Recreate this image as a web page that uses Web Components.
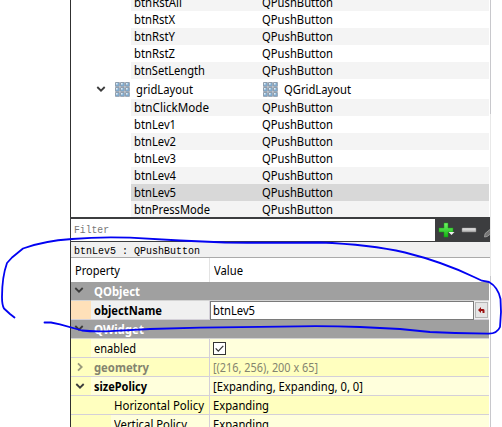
<!DOCTYPE html>
<html lang="en"><head><meta charset="utf-8"><title>Object inspector</title>
<style>html,body{margin:0;width:502px;height:427px;overflow:hidden;background:#fff}</style></head><body>
<designer-panel></designer-panel>
<script>
const make = (name, html, setup) => {
  const t = document.createElement('template');
  t.innerHTML = html;
  customElements.define(name, class extends HTMLElement {
    connectedCallback() {
      if (this.shadowRoot) return;
      this.attachShadow({mode: 'open'}).append(t.content.cloneNode(true));
      if (setup) setup(this, this.shadowRoot);
    }
  });
};

// A label whose natural width is condensed or widened to the w attribute.
make('fit-label', `<style>
:host{display:block;white-space:pre;flex:none;line-height:17px}
span{display:inline-block;transform-origin:0 50%}
</style><span><slot></slot></span>`, (el, root) => {
  const s = root.querySelector('span'), w = +el.getAttribute('w');
  const n = s.getBoundingClientRect().width;
  el.style.width = w + 'px';
  if (n) s.style.transform = `scaleX(${w / n})`;
});

make('chevron-mark', `<style>
:host{display:block;flex:none;width:10px;height:10px;color:#3b3b3b}
svg{display:block}:host([closed]) svg{transform:rotate(-90deg)}
:host([closed]){color:#98987c}
</style><svg width="10" height="10"><path d="M1.3 3 5 6.7 8.7 3" fill="none" stroke="currentColor" stroke-width="1.8"/></svg>`);

make('grid-icon', `<style>:host{display:block;flex:none;width:15px;height:15px}svg{display:block}</style>
<svg width="15" height="15"><g id="c"></g></svg>`,
(el, root) => {
  const g = root.querySelector('#c');
  const cell = (x, y, s, f) => {
    const r = document.createElementNS('http://www.w3.org/2000/svg', 'rect');
    for (const [k, v] of Object.entries({x, y, width: s, height: s, fill: f})) r.setAttribute(k, v);
    g.append(r);
  };
  for (let y = 0; y < 3; y++) for (let x = 0; x < 3; x++) {
    cell(x*5+.2, y*5+.2, 4.5, '#76879a');
    cell(x*5+1, y*5+1, 3, '#7fa9cc');
    cell(x*5+1, y*5+1, 1.6, '#dcecf7');
  }
});

make('tree-row', `<style>
:host{display:flex;height:17px;padding-left:60px;flex:none}
.b{flex:1;display:grid;grid-template-columns:128px 1fr;padding-left:3px;background:var(--bg,#fff)}
:host([alt]){--bg:#f4f4f4}:host([selected]){--bg:#d8d8d8}
</style><div class="b"><slot></slot></div>`);

make('tree-group', `<style>
:host{display:flex;height:20px;flex:none;align-items:center;box-sizing:border-box;padding-left:25px}
.a{display:flex;width:167px;align-items:center}.c{display:flex;align-items:center}
grid-icon{margin-left:9px;margin-right:6px}.c grid-icon{margin-left:0}
fit-label{margin-top:1px}
</style><div class="a"><chevron-mark></chevron-mark><grid-icon></grid-icon><fit-label w="57">gridLayout</fit-label></div>
<div class="c"><grid-icon></grid-icon><fit-label w="67">QGridLayout</fit-label></div>`);

make('filter-bar', `<style>
:host{display:flex;flex:none;height:25px;box-sizing:border-box;padding:2px 0 1px 1px;background:#3c3d3f;width:421px;overflow:hidden;margin-left:-1px}
.i{width:364px;background:#fff;color:#777;font-family:"Liberation Mono",monospace;font-size:11.5px;padding-left:3px;box-sizing:border-box;flex:none}
fit-label{line-height:22px}svg{display:block;flex:none}
</style><div class="i"><fit-label w="35">Filter</fit-label></div>
<svg width="56" height="22"><defs><linearGradient id="p" x2="0" y2="1"><stop stop-color="#72f466"/><stop offset="1" stop-color="#13b313"/></linearGradient><linearGradient id="m" x2="0" y2="1"><stop stop-color="#f1f1f1"/><stop offset="1" stop-color="#aaa"/></linearGradient></defs>
<path d="M9 4h4v5h5v4h-5v5H9v-5H4V9h5z" fill="url(#p)" stroke="#149d14" stroke-width=".5"/><path d="M13.5 13h6l-3 3z" fill="#eee"/>
<rect x="27" y="9" width="14" height="4" rx=".6" fill="url(#m)" stroke="#898989" stroke-width=".5"/>
<path d="m49.5 18 .6-3.5 6-5v5l-4 3z" fill="#777" stroke="#aaa" stroke-width=".8"/></svg>`);

make('property-section', `<style>
:host{display:flex;flex:none;height:19px;box-sizing:border-box;border-bottom:1px solid #d4d4d4;background:#a0a0a0;color:#fff;font-weight:700;padding-left:3px}
chevron-mark{margin-top:3px;margin-right:10px}::slotted(fit-label){margin-top:1px}
</style><chevron-mark></chevron-mark><slot></slot>`);

make('property-row', `<style>
:host{display:grid;grid-template-columns:139px 1fr;flex:none;height:19px;box-sizing:border-box;border-bottom:1px solid #d4d0d8;background:var(--row,#ffffdc)}
:host([deep]){--row:#ffffbf}
.n{display:flex;border-right:1px solid #d4d0d8;box-sizing:border-box}
.g{flex:none;width:20px;box-sizing:border-box;padding:4px 0 0 4px;background:var(--gutter,#ffffbf)}
:host([child]) .g{width:40px}
.n>.t{padding-left:3px}
.v{display:flex;padding-left:3px;min-width:0}
::slotted(fit-label){margin-top:1px}
:host([bold]) .t{font-weight:700}:host([dim]){color:#84846f}
:host([editing]){--row:#f0f0f0;--gutter:#ffe0b9}
:host([editing]) .v{padding-left:0}
</style><div class="n"><div class="g"><slot name="mark"></slot></div><div class="t"><slot name="name"></slot></div></div><div class="v"><slot></slot></div>`);

make('check-mark', `<style>:host{display:block;padding:3px 0 0 0}svg{display:block}</style>
<svg width="13" height="13"><rect x=".5" y=".5" width="12" height="12" fill="#fff" stroke="#333"/><path d="m2.7 6.3 2.6 2.8 5-5.3" fill="none" stroke="#333" stroke-width="1.2"/></svg>`);

make('line-edit', `<style>
:host{display:grid;grid-template-columns:264px 14px;height:18px}
.i{box-sizing:border-box;border:1px solid #7a7a7a;background:#fff;padding-left:2px}
.r{margin-left:1px;width:13px;height:16px;box-sizing:border-box;margin-top:1px;border:1px solid #b5b5b5;background:#e5e5e5}svg{display:block}
</style><div class="i"><slot></slot></div><div class="r"><svg width="11" height="14"><path d="M5 4 2 7l3 3V8.1h1.5v2h2V7.4Q8.5 6 7 6H5z" fill="#9b1010"/></svg></div>`);

make('ink-loop', `<style>:host{position:absolute;inset:0;pointer-events:none}svg{display:block}</style>
<svg width="502" height="427" fill="none" stroke="#0202f2" stroke-width="1.8" stroke-linecap="round" stroke-linejoin="round">
<path d="M14.5 317.5 10 314 4 308.5Q2 305 2 297 2 277 7 263L12 257.5 23 248.5Q43 241 72 239 100 236.5 130 237.7L180 240.5 225 242.5Q270 243 320 242.5 370 244.5 405 252.5 443 262 474 277L482 280.7 489 282Q498 287 500.5 299L501 312 500 327Q497 334 488 333.7L455 333 430 332 400 329 360 327Q320 325.5 280 326.7L200 327.7 150 329 115 330.8Q95 332 82 330.5L60 324.3 51 322.5H44.5"/></svg>`);

make('designer-panel', `<style>
:host{display:block;position:relative;width:502px;height:427px;overflow:hidden;font:12px/17px "Noto Sans","Open Sans",sans-serif;color:#000}
.p{display:flex;flex-direction:column;width:418px;height:427px;margin-left:70px;border-left:1px solid #303030;box-sizing:content-box;flex:none}
.f{display:flex;width:502px;height:427px}
.tree{display:flex;flex:none;flex-direction:column;height:217px;overflow:hidden;width:418px}
.tree>tree-row:first-child{margin-top:-6px}
.sel{flex:none;height:16px;width:420px;box-sizing:border-box;background:#f0f0f0;border-bottom:1px solid #aaa;font:11.5px/15px "Liberation Mono",monospace;padding-left:3px}
.h{display:grid;grid-template-columns:139px 1fr;height:24px;flex:none}
.h>div{padding:4px 0 0 4px}.h>div:first-child{border-right:1px solid #e3e3e3}
.edge{flex:none;width:1px;margin-left:1px;background:linear-gradient(#c8c8cc 114px,#e8e8e8 114px 276px,#c8c8cc 276px)}
</style>
<div class="f"><div class="p"><div class="tree">
<tree-row alt><fit-label w="48">btnRstAll</fit-label><fit-label w="71">QPushButton</fit-label></tree-row>
<tree-row><fit-label w="41">btnRstX</fit-label><fit-label w="71">QPushButton</fit-label></tree-row>
<tree-row alt><fit-label w="41">btnRstY</fit-label><fit-label w="71">QPushButton</fit-label></tree-row>
<tree-row><fit-label w="41">btnRstZ</fit-label><fit-label w="71">QPushButton</fit-label></tree-row>
<tree-row alt><fit-label w="71">btnSetLength</fit-label><fit-label w="71">QPushButton</fit-label></tree-row>
<tree-group></tree-group>
<tree-row alt><fit-label w="75">btnClickMode</fit-label><fit-label w="71">QPushButton</fit-label></tree-row>
<tree-row><fit-label w="42">btnLev1</fit-label><fit-label w="71">QPushButton</fit-label></tree-row>
<tree-row alt><fit-label w="42">btnLev2</fit-label><fit-label w="71">QPushButton</fit-label></tree-row>
<tree-row><fit-label w="42">btnLev3</fit-label><fit-label w="71">QPushButton</fit-label></tree-row>
<tree-row alt><fit-label w="42">btnLev4</fit-label><fit-label w="71">QPushButton</fit-label></tree-row>
<tree-row selected><fit-label w="42">btnLev5</fit-label><fit-label w="71">QPushButton</fit-label></tree-row>
<tree-row alt><fit-label w="76">btnPressMode</fit-label><fit-label w="71">QPushButton</fit-label></tree-row>
</div>
<filter-bar></filter-bar>
<div class="sel"><fit-label w="126">btnLev5 : QPushButton</fit-label></div>
<div class="h"><div><fit-label w="45">Property</fit-label></div><div><fit-label w="29">Value</fit-label></div></div>
<property-section><fit-label w="46">QObject</fit-label></property-section>
<property-row editing bold><fit-label slot="name" w="68">objectName</fit-label><line-edit><fit-label w="42">btnLev5</fit-label></line-edit></property-row>
<property-section><fit-label w="50">QWidget</fit-label></property-section>
<property-row><fit-label slot="name" w="42">enabled</fit-label><check-mark></check-mark></property-row>
<property-row deep bold dim><chevron-mark slot="mark" closed></chevron-mark><fit-label slot="name" w="55">geometry</fit-label><fit-label w="105">[(216, 256), 200 x 65]</fit-label></property-row>
<property-row bold><chevron-mark slot="mark"></chevron-mark><fit-label slot="name" w="53">sizePolicy</fit-label><fit-label w="150">[Expanding, Expanding, 0, 0]</fit-label></property-row>
<property-row deep child><fit-label slot="name" w="90">Horizontal Policy</fit-label><fit-label w="56">Expanding</fit-label></property-row>
<property-row child><fit-label slot="name" w="73">Vertical Policy</fit-label><fit-label w="56">Expanding</fit-label></property-row>
</div><div class="edge"></div></div>
<ink-loop></ink-loop>`);
</script></body></html>
